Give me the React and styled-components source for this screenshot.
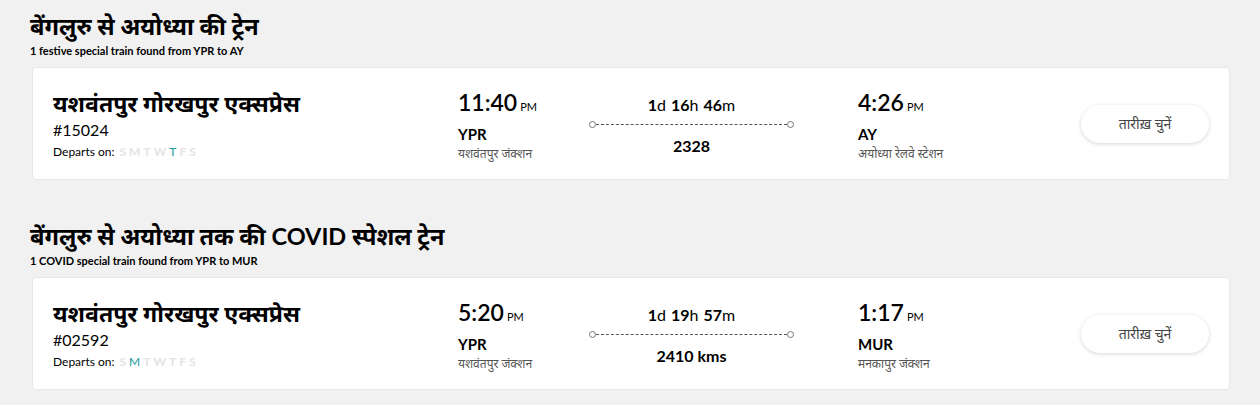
import React from 'react';
import styled, { createGlobalStyle } from 'styled-components';

const GlobalStyle = createGlobalStyle`
  html, body {
    margin: 0;
    padding: 0;
    background: #f1f1f1;
  }
  body {
    font-family: Lato, "Noto Sans", sans-serif;
    color: #000;
  }
`;

const Page = styled.div`
  padding: 8px 30px 0 32px;
`;

const Section = styled.section`
  margin-bottom: 38px;

  &:last-child {
    margin-bottom: 0;
  }
`;

const Heading = styled.h2`
  margin: 0 0 0 -2px;
  font-size: 23.5px;
  line-height: 36px;
  font-weight: 700;
`;

const SubHeading = styled.div`
  margin: 0 0 9px -2px;
  font-size: 11px;
  line-height: 14px;
  font-weight: 700;
`;

const Card = styled.div`
  display: grid;
  grid-template-columns: 405px 131px 205px 1fr auto;
  align-items: start;
  height: 113px;
  box-sizing: border-box;
  padding: 20px 20px 0 20px;
  background: #fff;
  border: 1px solid #e8e8e8;
  border-radius: 4px;
`;

const TrainName = styled.div`
  font-size: 23px;
  line-height: 30px;
  font-weight: 700;
`;

const TrainNumber = styled.div`
  font-size: 16px;
  line-height: 20px;
  margin-top: 2px;
`;

const DepartRow = styled.div`
  display: flex;
  align-items: center;
  margin-top: 4px;
  font-size: 12px;
  line-height: 16px;
`;

const DayList = styled.span`
  display: inline-flex;
  gap: 3px;
  margin-left: 5px;
`;

const Day = styled.span`
  color: ${p => (p.$on ? '#1a9aa0' : '#e4e4e4')};
  font-weight: ${p => (p.$on ? 400 : 700)};
`;

const StopCol = styled.div`
  padding-left: ${p => p.$offset || 0}px;
`;

const Time = styled.div`
  font-size: 23px;
  line-height: 28px;
  font-weight: 600;
`;

const Meridian = styled.span`
  font-size: 11px;
  font-weight: 400;
  margin-left: 3px;
`;

const StationCode = styled.div`
  font-size: 15px;
  line-height: 20px;
  font-weight: 700;
  margin-top: 3px;
`;

const StationName = styled.div`
  font-size: 12px;
  line-height: 16px;
  margin-top: 2px;
  color: #555;
`;

const Middle = styled.div`
  display: flex;
  flex-direction: column;
  align-items: center;
  padding-top: 7px;
`;

const Duration = styled.div`
  font-size: 16px;
  line-height: 20px;
  font-weight: 700;

  & span {
    font-weight: 400;
    margin-right: 5px;
  }
  & span:last-child {
    margin-right: 0;
  }
`;

const Track = styled.div`
  width: 100%;
  height: 7px;
  margin: 6px 0 8px;
  display: flex;
  align-items: center;
`;

const Dot = styled.span`
  width: 5px;
  height: 5px;
  border: 1px solid #777;
  border-radius: 50%;
  flex: none;
`;

const Dashes = styled.span`
  flex: 1;
  border-top: 1px dashed #555;
`;

const Distance = styled.div`
  font-size: 16px;
  line-height: 20px;
  font-weight: 700;
`;

const ButtonWrap = styled.div`
  align-self: center;
  margin-top: -20px;
`;

const DateButton = styled.button`
  width: 128px;
  height: 38px;
  border: none;
  border-radius: 20px;
  background: #fff;
  box-shadow: 0 1px 4px rgba(0, 0, 0, 0.16);
  font-family: Lato, "Noto Sans", sans-serif;
  font-size: 14px;
  color: #444;
  cursor: pointer;
`;

const days = ['S', 'M', 'T', 'W', 'T', 'F', 'S'];

const sections = [
  {
    title: 'बेंगलुरु से अयोध्या की ट्रेन',
    sub: '1 festive special train found from YPR to AY',
    train: {
      name: 'यशवंतपुर गोरखपुर एक्सप्रेस',
      number: '#15024',
      runs: [4],
      dep: { time: '11:40', code: 'YPR', station: 'यशवंतपुर जंक्शन' },
      arr: { time: '4:26', code: 'AY', station: 'अयोध्या रेलवे स्टेशन' },
      duration: ['1', '16', '46'],
      distance: '2328',
    },
  },
  {
    title: 'बेंगलुरु से अयोध्या तक की COVID स्पेशल ट्रेन',
    sub: '1 COVID special train found from YPR to MUR',
    train: {
      name: 'यशवंतपुर गोरखपुर एक्सप्रेस',
      number: '#02592',
      runs: [1],
      dep: { time: '5:20', code: 'YPR', station: 'यशवंतपुर जंक्शन' },
      arr: { time: '1:17', code: 'MUR', station: 'मनकापुर जंक्शन' },
      duration: ['1', '19', '57'],
      distance: '2410 kms',
    },
  },
];

const Stop = ({ stop, offset }) => (
  <StopCol $offset={offset}>
    <Time>
      {stop.time}
      <Meridian>PM</Meridian>
    </Time>
    <StationCode>{stop.code}</StationCode>
    <StationName>{stop.station}</StationName>
  </StopCol>
);

const TrainCard = ({ train }) => (
  <Card>
    <div>
      <TrainName>{train.name}</TrainName>
      <TrainNumber>{train.number}</TrainNumber>
      <DepartRow>
        Departs on:
        <DayList>
          {days.map((d, i) => (
            <Day key={i} $on={train.runs.includes(i)}>{d}</Day>
          ))}
        </DayList>
      </DepartRow>
    </div>
    <Stop stop={train.dep} />
    <Middle>
      <Duration>
        {train.duration[0]}<span>d</span>
        {train.duration[1]}<span>h</span>
        {train.duration[2]}<span>m</span>
      </Duration>
      <Track>
        <Dot />
        <Dashes />
        <Dot />
      </Track>
      <Distance>{train.distance}</Distance>
    </Middle>
    <Stop stop={train.arr} offset={64} />
    <ButtonWrap>
      <DateButton>तारीख़ चुनें</DateButton>
    </ButtonWrap>
  </Card>
);

export default function App() {
  return (
    <>
      <GlobalStyle />
      <Page>
        {sections.map((s, i) => (
          <Section key={i}>
            <Heading>{s.title}</Heading>
            <SubHeading>{s.sub}</SubHeading>
            <TrainCard train={s.train} />
          </Section>
        ))}
      </Page>
    </>
  );
}
